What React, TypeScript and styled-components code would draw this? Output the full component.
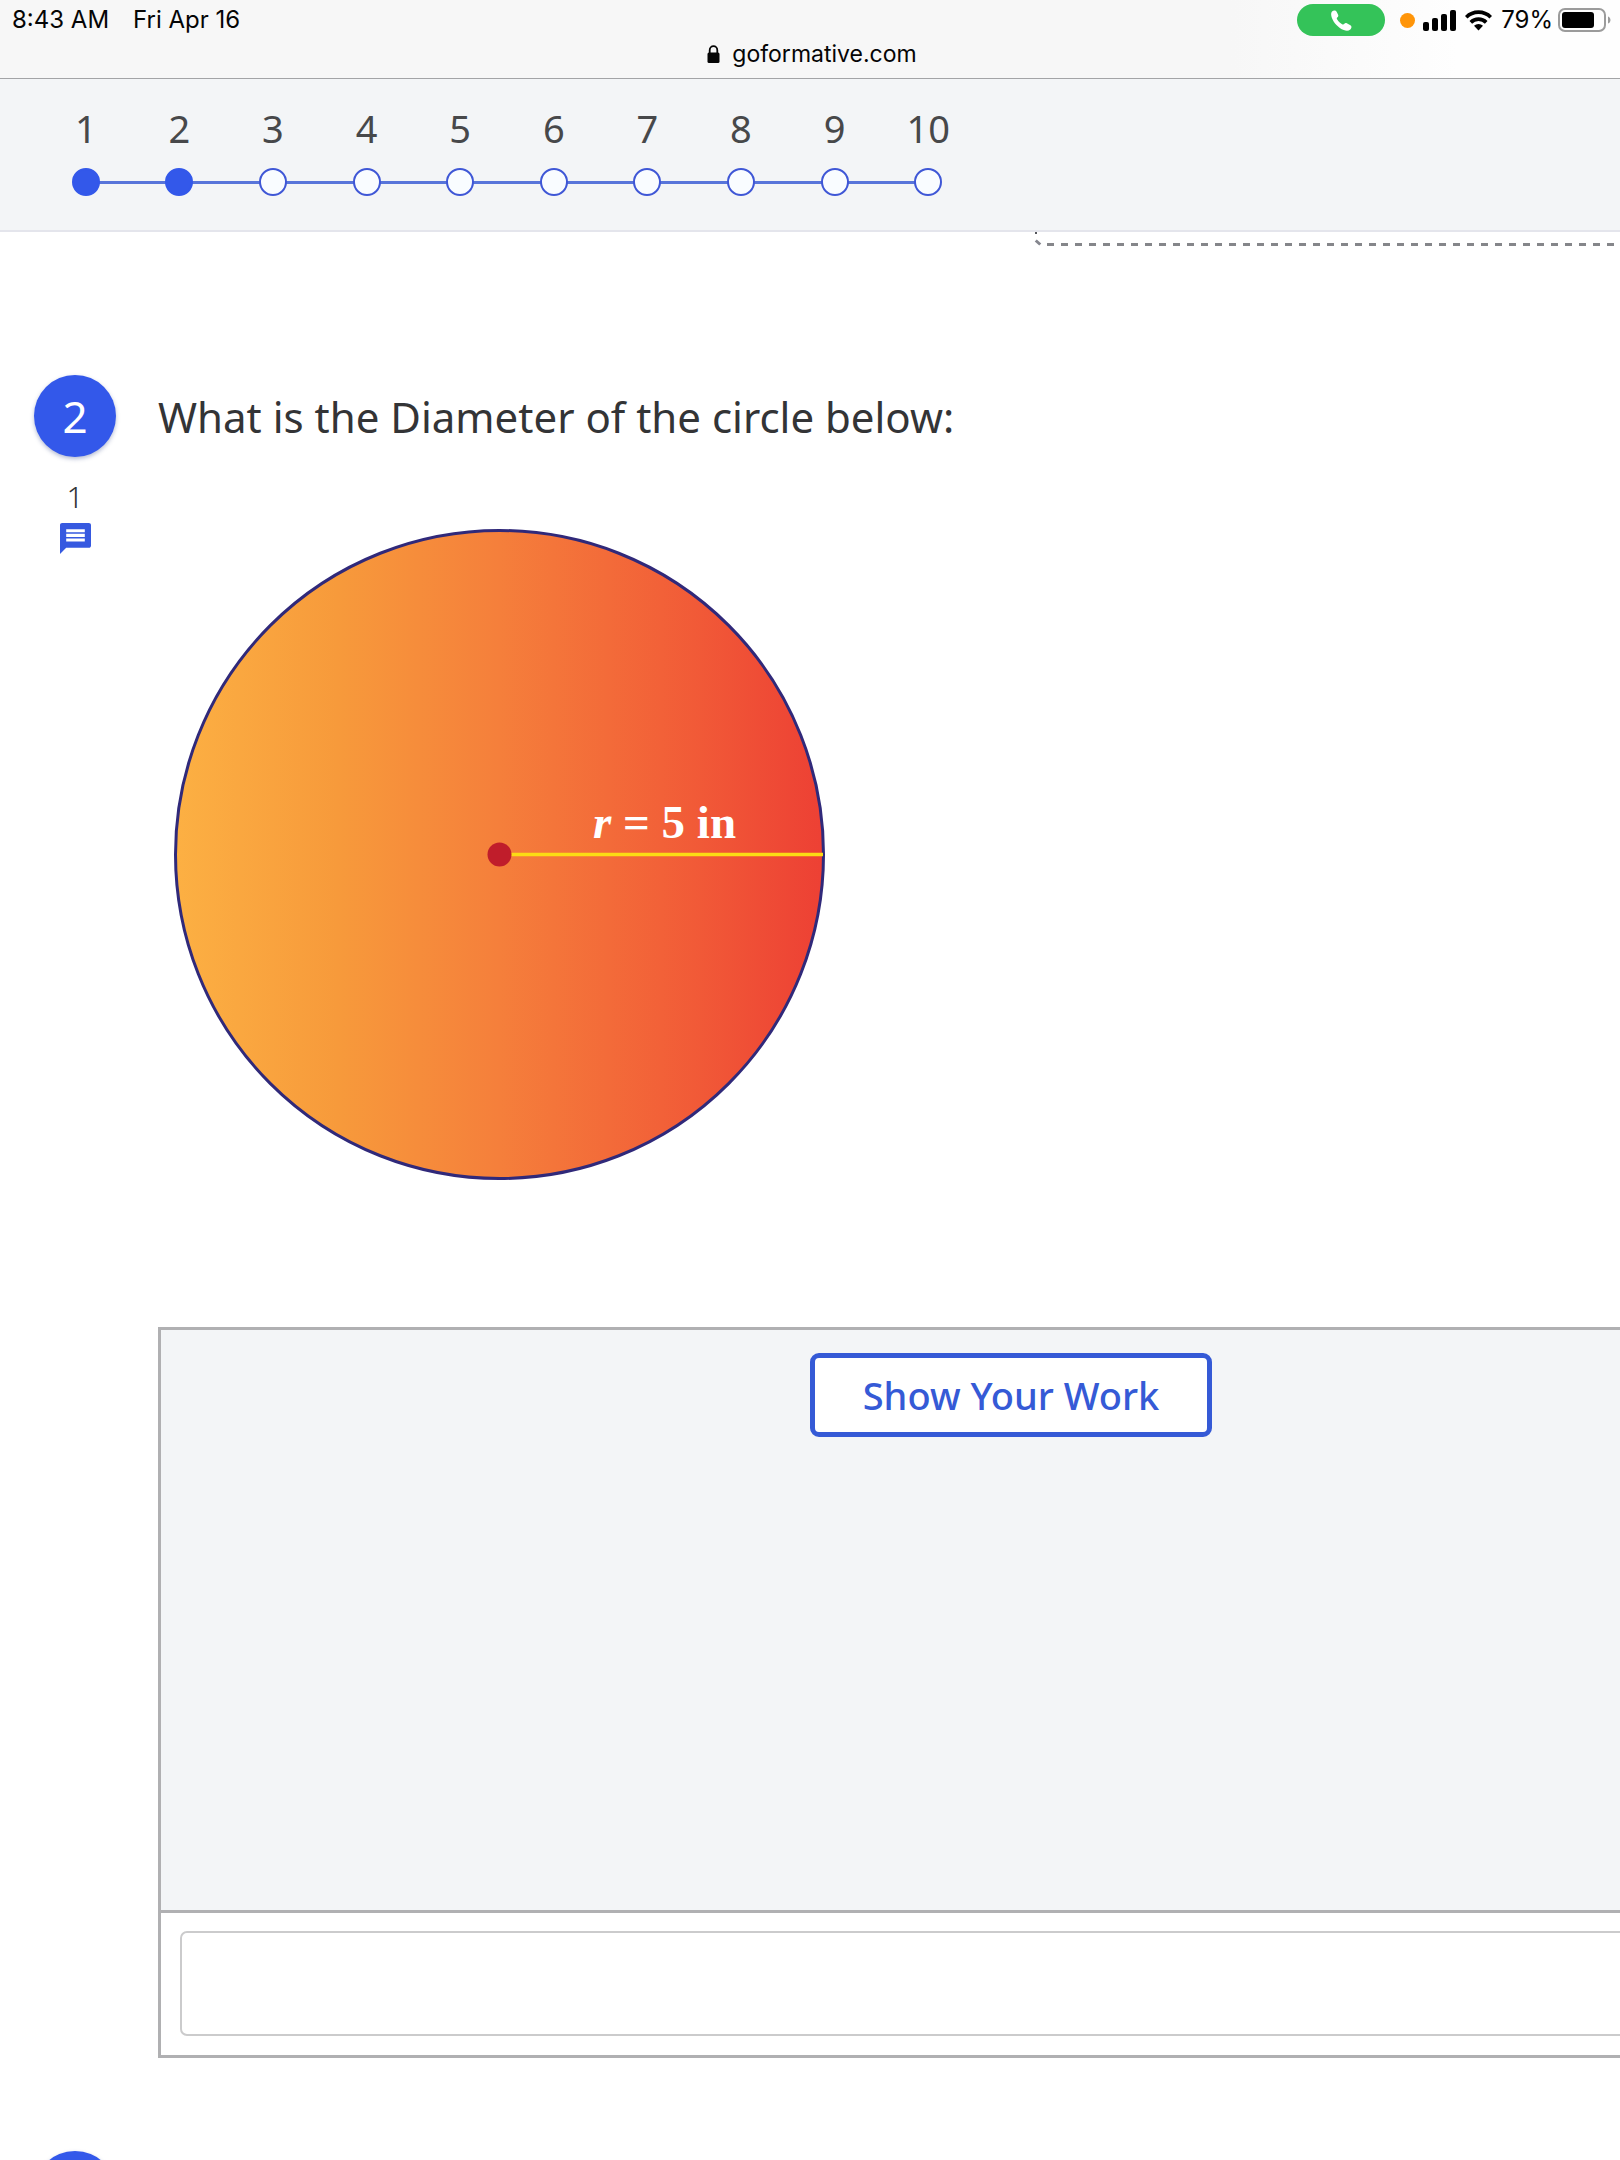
import React from "react";
import styled, { createGlobalStyle } from "styled-components";

const BLUE = "#3358ea";
const OUTLINE_BLUE = "#355ad6";
const PANEL_GREY = "#f3f5f7";
const OVERHANG = "244px";

const GlobalStyle = createGlobalStyle`
  *, *::before, *::after { box-sizing: border-box; }
  body { margin: 0; background: #fff; }
  h2, ol, p { margin: 0; padding: 0; }
  svg { display: block; flex: none; }
`;

const Shell = styled.div`
  display: flex;
  flex-direction: column;
  height: 100vh;
  overflow: hidden;
  font-family: "Noto Sans", "Open Sans", sans-serif;
  color: #333436;
`;

const BrowserBar = styled.header`
  flex: none;
  height: 79px;
  border-bottom: 1px solid #a3a4a6;
  background: linear-gradient(to right, #f7f7f7 76%, #fefefe 90%);
  font-family: Inter, Roboto, sans-serif;
  font-size: 24px;
  line-height: 32px;
  color: #050505;
`;

const StatusRow = styled.div`
  display: flex;
  align-items: center;
  justify-content: space-between;
  padding: 4px 9px 0 12px;
`;

const Clock = styled.div`
  display: flex;
  gap: 24px;
`;

const Indicators = styled.div`
  display: flex;
  align-items: center;
`;

const CallPill = styled.button`
  display: flex;
  align-items: center;
  justify-content: center;
  width: 88px;
  height: 32px;
  margin-right: 15px;
  padding: 0;
  border: 0;
  border-radius: 16px;
  background: #34c359;
`;

const MicDot = styled.span`
  width: 15px;
  height: 15px;
  margin-right: 8px;
  border-radius: 50%;
  background: #ff9509;
`;

const SignalBox = styled.span`
  display: flex;
  gap: 9px;
  margin-right: 9px;
`;

const Battery = styled.span`
  margin-left: 5px;
`;

const AddressRow = styled.div`
  display: flex;
  align-items: center;
  justify-content: center;
  gap: 12px;
  padding: 2px 0 0 4px;
  font-size: 23px;
`;

const StepNav = styled.nav`
  flex: none;
  height: 153px;
  padding: 23px 39px 0;
  border-bottom: 2px solid #e4e5ec;
  background: ${PANEL_GREY};
`;

const StepList = styled.ol`
  display: grid;
  grid-template-columns: repeat(10, 1fr);
  max-width: 936px;
  list-style: none;
`;

const Step = styled.li`
  position: relative;

  &:not(:last-child)::after {
    content: "";
    position: absolute;
    left: 50%;
    bottom: 12px;
    width: 100%;
    height: 3px;
    background: #5875da;
  }
`;

const StepLink = styled.a`
  display: flex;
  flex-direction: column;
  align-items: center;
  gap: 14px;
  font-size: 38px;
  line-height: 52px;
  color: #47484a;
  text-decoration: none;
`;

const StepDot = styled.span<{ $done: boolean }>`
  position: relative;
  z-index: 1;
  width: 28px;
  height: 28px;
  border: 2px solid ${(p) => (p.$done ? BLUE : "#3f57d6")};
  border-radius: 50%;
  background: ${(p) => (p.$done ? BLUE : "#f9fcff")};
`;

const Content = styled.main`
  flex: 1;
  min-height: 0;
  overflow: hidden;
`;

const DropZone = styled.div`
  position: relative;
  height: 14px;
  margin-left: 1035px;
  background:
    linear-gradient(#55565c, #55565c) 0 0 / 2px 2px no-repeat,
    repeating-linear-gradient(to right, #85868a 0 7px, transparent 7px 14px) 12px 100% / 100% 3px no-repeat;

  &::before {
    content: "";
    position: absolute;
    left: 0;
    bottom: 2px;
    width: 6px;
    height: 3px;
    background: #85868e;
    transform: rotate(42deg);
  }
`;

const Question = styled.section<{ $first?: boolean }>`
  display: grid;
  grid-template-columns: 82px minmax(0, 1fr);
  column-gap: 42px;
  padding: ${(p) => (p.$first ? "129px" : "93px")} 0 0 34px;
`;

const Rail = styled.div`
  display: flex;
  flex-direction: column;
  align-items: center;
`;

const Badge = styled.div`
  display: flex;
  align-items: center;
  justify-content: center;
  width: 82px;
  height: 82px;
  border-radius: 50%;
  background: ${BLUE};
  box-shadow: 0 2px 4px rgba(40, 60, 130, 0.35);
  font-size: 44px;
  line-height: 56px;
  color: #fff;
`;

const Points = styled.p`
  margin-top: 20px;
  font-size: 30px;
  font-weight: 300;
  line-height: 40px;
`;

const CommentButton = styled.button`
  margin-top: 6px;
  padding: 0;
  border: 0;
  background: none;
`;

const Body = styled.div`
  padding-top: 14px;
`;

const Prompt = styled.h2`
  font-size: 42px;
  font-weight: 400;
  line-height: 56px;
`;

const Figure = styled.svg`
  margin: 84px 0 0 16px;
`;

const AnswerPanel = styled.div`
  margin-top: 146px;
  margin-right: -${OVERHANG};
  border: 3px solid #b0b0b2;
`;

const WorkArea = styled.div`
  display: flex;
  justify-content: center;
  align-items: flex-start;
  height: 583px;
  padding-top: 23px;
  border-bottom: 3px solid #b0b0b2;
  background: ${PANEL_GREY};
`;

const WorkButton = styled.button`
  width: 402px;
  height: 84px;
  padding: 0;
  border: 5px solid ${OUTLINE_BLUE};
  border-radius: 9px;
  background: #fff;
  font: 500 38px/52px "Noto Sans", "Open Sans", sans-serif;
  color: ${OUTLINE_BLUE};
`;

const AnswerRow = styled.div`
  padding: 18px 19px 19px;
`;

const AnswerInput = styled.input`
  display: block;
  width: 100%;
  height: 105px;
  padding: 0 24px;
  border: 2px solid #cbcbcc;
  border-radius: 7px;
  background: #fff;
  font: 400 38px/52px "Noto Sans", "Open Sans", sans-serif;
`;

const steps = Array.from({ length: 10 }, (_, i) => i + 1);

function PhoneIcon() {
  return (
    <svg width="21" height="21" viewBox="0 0 21 21" aria-hidden="true">
      <path
        d="M1 1.6C2.2.2 4.6-.1 5.5 1.6l1.6 3.2c.5 1.1.1 1.9-.9 2.7-.6.5-.6 1.1 0 2 1.3 2 3 3.5 4.9 4.7.9.6 1.5.5 2-.1.8-1 1.7-1.3 2.7-.8l3.6 1.9c1.6.9 1.2 3.2-.1 4.4-1.7 1.5-4 1.6-6.5.5C7.3 17.7 2.8 12.9.9 7.9 0 5.5-.3 3.1 1 1.6z"
        fill="#fff"
      />
    </svg>
  );
}

function SignalIcon() {
  return (
    <svg width="33" height="21" viewBox="0 0 33 21" aria-hidden="true">
      <rect x="0" y="12" width="6" height="9" rx="2" />
      <rect x="9" y="8" width="6" height="13" rx="2" />
      <rect x="18" y="4" width="6" height="17" rx="2" />
      <rect x="27" y="0" width="6" height="21" rx="2" />
    </svg>
  );
}

function WifiIcon() {
  return (
    <svg width="27" height="21" viewBox="0 0 27 21" aria-hidden="true">
      <g fill="none" stroke="#000" strokeWidth="3.7">
        <path d="M1.2 7.3a17.4 17.4 0 0 1 24.6 0" />
        <path d="M5.8 12.4a10.9 10.9 0 0 1 15.4 0" />
      </g>
      <path d="M9 15.8a6.4 6.4 0 0 1 9 0L13.5 20.6z" />
    </svg>
  );
}

function BatteryIcon() {
  return (
    <svg width="53" height="24" viewBox="0 0 53 24" aria-hidden="true">
      <rect x="1" y="1" width="46" height="22" rx="6" fill="none" stroke="#9b9b9b" strokeWidth="2" />
      <rect x="4" y="4" width="32" height="16" rx="3" />
      <path d="M50 8.5c3.3 1 3.3 6 0 7z" fill="#9b9b9b" />
    </svg>
  );
}

function LockIcon() {
  return (
    <svg width="13" height="18" viewBox="0 0 13 18" aria-hidden="true">
      <path d="M2.7 9V5.2a3.8 4.1 0 0 1 7.6 0V9" fill="none" stroke="#050505" strokeWidth="1.8" />
      <rect x="0.5" y="7.5" width="12" height="10.5" rx="1.5" fill="#050505" />
    </svg>
  );
}

function CommentIcon() {
  return (
    <svg width="31" height="31" viewBox="2 2 20 20" aria-hidden="true">
      <path
        d="M20.6 2H3.4C2.6 2 2 2.6 2 3.4V22l4-4h14.6c.8 0 1.4-.6 1.4-1.4V3.4c0-.8-.6-1.4-1.4-1.4zM18 14H6v-2h12v2zm0-3H6V9h12v2zm0-3H6V6h12v2z"
        fill="#3659e0"
      />
    </svg>
  );
}

function CircleFigure() {
  return (
    <Figure width="652" height="652" viewBox="0 0 652 652" role="img" aria-label="Circle with radius r = 5 in">
      <defs>
        <linearGradient id="circleFill">
          <stop offset="0" stopColor="#fcb043" />
          <stop offset="0.25" stopColor="#f79a3b" />
          <stop offset="0.5" stopColor="#f57f3b" />
          <stop offset="0.75" stopColor="#f26138" />
          <stop offset="1" stopColor="#ed4034" />
        </linearGradient>
      </defs>
      <circle cx="325.5" cy="325.500" r="324" fill="url(#circleFill)" stroke="#30297a" strokeWidth="3" />
      <line x1="325" y1="325.5" x2="649" y2="325.5" stroke="#fbdc14" strokeWidth="3.5" />
      <circle cx="325.5" cy="325.5" r="12" fill="#c01d2b" />
      <text x="419" y="309" fill="#fff" fontFamily="'Liberation Serif', serif" fontSize="47" fontWeight="700">
        <tspan fontStyle="italic">r</tspan>
        <tspan> = 5 in</tspan>
      </text>
    </Figure>
  );
}

export default function App() {
  return (
    <>
      <GlobalStyle />
      <Shell>
        <BrowserBar>
          <StatusRow>
            <Clock>
              <span>8:43 AM</span>
              <span>Fri Apr 16</span>
            </Clock>
            <Indicators>
              <CallPill aria-label="Return to call">
                <PhoneIcon />
              </CallPill>
              <MicDot />
              <SignalBox>
                <SignalIcon />
                <WifiIcon />
              </SignalBox>
              <span>79%</span>
              <Battery>
                <BatteryIcon />
              </Battery>
            </Indicators>
          </StatusRow>
          <AddressRow>
            <LockIcon />
            <span>goformative.com</span>
          </AddressRow>
        </BrowserBar>

        <StepNav aria-label="Questions">
          <StepList>
            {steps.map((n) => (
              <Step key={n}>
                <StepLink href={`#question-${n}`}>
                  {n}
                  <StepDot $done={n <= 2} />
                </StepLink>
              </Step>
            ))}
          </StepList>
        </StepNav>

        <Content>
          <DropZone />
          <Question id="question-2" $first>
            <Rail>
              <Badge>2</Badge>
              <Points>1</Points>
              <CommentButton aria-label="Comments">
                <CommentIcon />
              </CommentButton>
            </Rail>
            <Body>
              <Prompt>What is the Diameter of the circle below:</Prompt>
              <CircleFigure />
              <AnswerPanel>
                <WorkArea>
                  <WorkButton>Show Your Work</WorkButton>
                </WorkArea>
                <AnswerRow>
                  <AnswerInput type="text" aria-label="Your answer" />
                </AnswerRow>
              </AnswerPanel>
            </Body>
          </Question>
          <Question id="question-3">
            <Rail>
              <Badge />
            </Rail>
          </Question>
        </Content>
      </Shell>
    </>
  );
}
